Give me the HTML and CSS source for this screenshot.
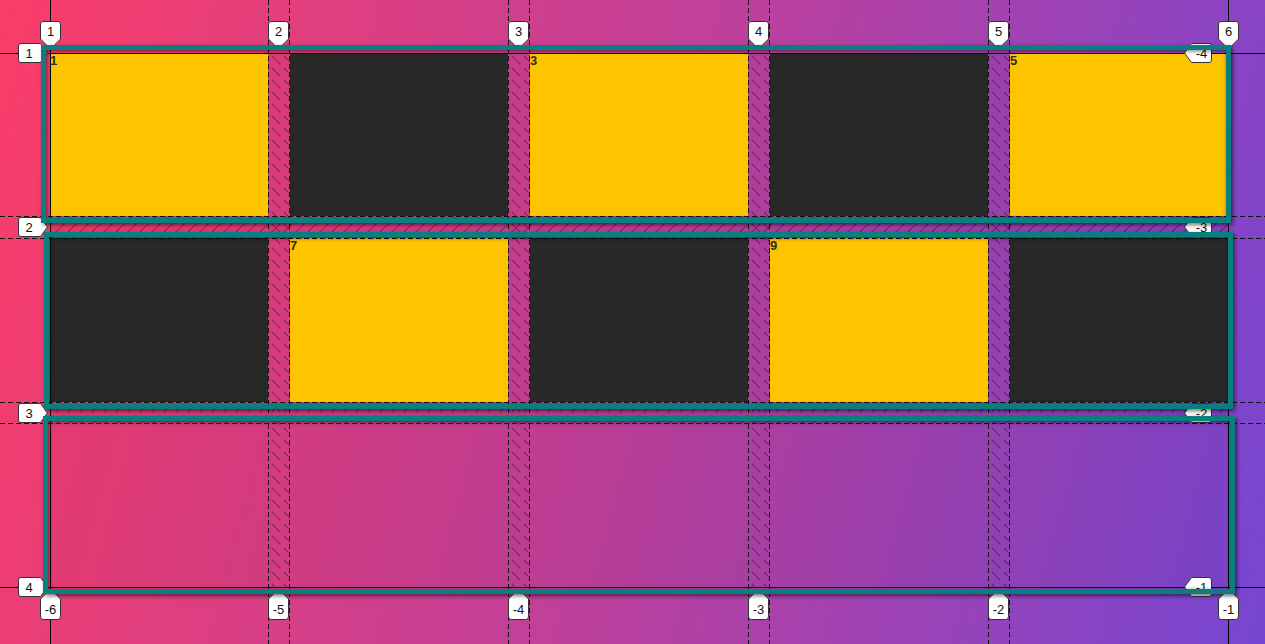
FILE: index.html
```html
<!DOCTYPE html>
<html lang="en">
<head>
<meta charset="utf-8">
<title>Grid inspector</title>
<link rel="stylesheet" href="styles.css">
</head>
<body>
<div class="grid">
  <div class="cell light">1</div>
  <div class="cell dark">2</div>
  <div class="cell light">3</div>
  <div class="cell dark">4</div>
  <div class="cell light">5</div>
  <div class="cell dark">6</div>
  <div class="cell light">7</div>
  <div class="cell dark">8</div>
  <div class="cell light">9</div>
  <div class="cell dark">10</div>
</div>

<svg class="overlay" width="1265" height="644" viewBox="0 0 1265 644" xmlns="http://www.w3.org/2000/svg">
  <defs>
    <pattern id="hatchCol" patternUnits="userSpaceOnUse" width="12" height="12">
      <path d="M0 0 L12 12" stroke="rgba(0,0,0,0.32)" stroke-width="1.2" stroke-dasharray="6 5"/>
    </pattern>
    <pattern id="hatchRow" patternUnits="userSpaceOnUse" width="12" height="12">
      <path d="M0 12 L12 0" stroke="rgba(0,0,0,0.32)" stroke-width="1.2" stroke-dasharray="6 5"/>
    </pattern>
  </defs>

  <g class="gaps">
    <rect x="268" y="53" width="22" height="534" fill="url(#hatchCol)"/>
    <rect x="508" y="53" width="22" height="534" fill="url(#hatchCol)"/>
    <rect x="748" y="53" width="22" height="534" fill="url(#hatchCol)"/>
    <rect x="988" y="53" width="22" height="534" fill="url(#hatchCol)"/>
    <rect x="50" y="216.33" width="1178" height="22" fill="url(#hatchRow)"/>
    <rect x="50" y="401.67" width="1178" height="22" fill="url(#hatchRow)"/>
  </g>

  <g class="dashed" stroke="#111" stroke-width="1" stroke-dasharray="5 3">
    <line x1="268.5" y1="0" x2="268.5" y2="644"/>
    <line x1="289.5" y1="0" x2="289.5" y2="644"/>
    <line x1="508.5" y1="0" x2="508.5" y2="644"/>
    <line x1="529.5" y1="0" x2="529.5" y2="644"/>
    <line x1="748.5" y1="0" x2="748.5" y2="644"/>
    <line x1="769.5" y1="0" x2="769.5" y2="644"/>
    <line x1="988.5" y1="0" x2="988.5" y2="644"/>
    <line x1="1009.5" y1="0" x2="1009.5" y2="644"/>
    <line x1="0" y1="216.5" x2="1265" y2="216.5"/>
    <line x1="0" y1="238.5" x2="1265" y2="238.5"/>
    <line x1="0" y1="402.5" x2="1265" y2="402.5"/>
    <line x1="0" y1="423.5" x2="1265" y2="423.5"/>
  </g>

  <g class="solid" stroke="#000" stroke-width="1">
    <line x1="50.5" y1="0" x2="50.5" y2="644"/>
    <line x1="1228.5" y1="0" x2="1228.5" y2="644"/>
    <line x1="0" y1="53.5" x2="1265" y2="53.5"/>
    <line x1="0" y1="587.5" x2="1265" y2="587.5"/>
  </g>

  <g class="labels">
    <!-- top column labels -->
    <path class="lbl" d="M40.5 39 V24 Q40.5 21.5 43 21.5 H58 Q60.5 21.5 60.5 24 V39 L50.5 49 Z"/>
    <text class="lt" x="50.5" y="35.5">1</text>
    <path class="lbl" d="M268.5 39 V24 Q268.5 21.5 271 21.5 H286 Q288.5 21.5 288.5 24 V39 L278.5 49 Z"/>
    <text class="lt" x="278.5" y="35.5">2</text>
    <path class="lbl" d="M508.5 39 V24 Q508.5 21.5 511 21.5 H526 Q528.5 21.5 528.5 24 V39 L518.5 49 Z"/>
    <text class="lt" x="518.5" y="35.5">3</text>
    <path class="lbl" d="M748.5 39 V24 Q748.5 21.5 751 21.5 H766 Q768.5 21.5 768.5 24 V39 L758.5 49 Z"/>
    <text class="lt" x="758.5" y="35.5">4</text>
    <path class="lbl" d="M988.5 39 V24 Q988.5 21.5 991 21.5 H1006 Q1008.5 21.5 1008.5 24 V39 L998.5 49 Z"/>
    <text class="lt" x="998.5" y="35.5">5</text>
    <path class="lbl" d="M1218.5 39 V24 Q1218.5 21.5 1221 21.5 H1236 Q1238.5 21.5 1238.5 24 V39 L1228.5 49 Z"/>
    <text class="lt" x="1228.5" y="35.5">6</text>

    <!-- bottom column labels -->
    <path class="lbl" d="M40.5 599 V616 Q40.5 619.5 43 619.5 H58 Q60.5 619.5 60.5 616 V599 L50.5 589 Z"/>
    <text class="lt" x="50.5" y="614">-6</text>
    <path class="lbl" d="M268.5 599 V616 Q268.5 619.5 271 619.5 H286 Q288.5 619.5 288.5 616 V599 L278.5 589 Z"/>
    <text class="lt" x="278.5" y="614">-5</text>
    <path class="lbl" d="M508.5 599 V616 Q508.5 619.5 511 619.5 H526 Q528.5 619.5 528.5 616 V599 L518.5 589 Z"/>
    <text class="lt" x="518.5" y="614">-4</text>
    <path class="lbl" d="M748.5 599 V616 Q748.5 619.5 751 619.5 H766 Q768.5 619.5 768.5 616 V599 L758.5 589 Z"/>
    <text class="lt" x="758.5" y="614">-3</text>
    <path class="lbl" d="M988.5 599 V616 Q988.5 619.5 991 619.5 H1006 Q1008.5 619.5 1008.5 616 V599 L998.5 589 Z"/>
    <text class="lt" x="998.5" y="614">-2</text>
    <path class="lbl" d="M1218.5 599 V616 Q1218.5 619.5 1221 619.5 H1236 Q1238.5 619.5 1238.5 616 V599 L1228.5 589 Z"/>
    <text class="lt" x="1228.5" y="614">-1</text>

    <!-- left row labels -->
    <path class="lbl" d="M40.5 43.5 H21 Q18.5 43.5 18.5 46 V60 Q18.5 62.5 21 62.5 H40.5 L47.5 53 Z"/>
    <text class="lt" x="29" y="57.5">1</text>
    <path class="lbl" d="M40.5 217.5 H21 Q18.5 217.5 18.5 220 V234 Q18.5 236.5 21 236.5 H40.5 L47.5 227 Z"/>
    <text class="lt" x="29" y="231.5">2</text>
    <path class="lbl" d="M40.5 403.5 H21 Q18.5 403.5 18.5 406 V420 Q18.5 422.5 21 422.5 H40.5 L47.5 413 Z"/>
    <text class="lt" x="29" y="417.5">3</text>
    <path class="lbl" d="M40.5 577.5 H21 Q18.5 577.5 18.5 580 V594 Q18.5 596.5 21 596.5 H40.5 L47.5 587 Z"/>
    <text class="lt" x="29" y="591.5">4</text>

    <!-- right row labels -->
    <path class="lbl" d="M1191.5 43.5 H1209 Q1211.5 43.5 1211.5 46 V60 Q1211.5 62.5 1209 62.5 H1191.5 L1184.5 53 Z"/>
    <text class="lt" x="1201.5" y="57.5">-4</text>
    <path class="lbl" d="M1191.5 217.5 H1209 Q1211.5 217.5 1211.5 220 V234 Q1211.5 236.5 1209 236.5 H1191.5 L1184.5 227 Z"/>
    <text class="lt" x="1201.5" y="231.5">-3</text>
    <path class="lbl" d="M1191.5 403.5 H1209 Q1211.5 403.5 1211.5 406 V420 Q1211.5 422.5 1209 422.5 H1191.5 L1184.5 413 Z"/>
    <text class="lt" x="1201.5" y="417.5">-2</text>
    <path class="lbl" d="M1191.5 577.5 H1209 Q1211.5 577.5 1211.5 580 V594 Q1211.5 596.5 1209 596.5 H1191.5 L1184.5 587 Z"/>
    <text class="lt" x="1201.5" y="591.5">-1</text>
  </g>
</svg>

<div class="rowbox row-1"></div>
<div class="rowbox row-2"></div>
<div class="rowbox row-3"></div>
</body>
</html>
```

FILE: styles.css
```css
html, body {
  margin: 0;
  padding: 0;
  width: 1265px;
  height: 644px;
  overflow: hidden;
}

body {
  position: relative;
  background: linear-gradient(105deg, #fa3d68 0%, #c0409a 50%, #7646d2 100%);
  font-family: "Liberation Sans", Arial, sans-serif;
}

.grid {
  margin: 0 0 0 50px;
  position: relative;
  top: 53px;
  width: 1178px;
  height: 534px;
  display: grid;
  grid-template-columns: repeat(5, 218px);
  grid-template-rows: repeat(3, 1fr);
  gap: 22px;
  background: rgba(40, 0, 30, 0.04);
}

.cell {
  font: bold 13px/15px "Liberation Sans", Arial, sans-serif;
}

.cell.light {
  background: #ffc400;
  color: #2e2a1a;
}

.cell.dark {
  background: #282828;
  color: #292929;
}

.overlay {
  position: absolute;
  left: 0;
  top: 0;
  pointer-events: none;
}

.lbl {
  fill: #ffffff;
  stroke: #333333;
  stroke-width: 1;
}

.lt {
  font: 13px "Liberation Sans", Arial, sans-serif;
  fill: #111;
  text-anchor: middle;
}

.rowbox {
  position: absolute;
  box-sizing: border-box;
  border: 5px solid #0b7f7f;
  box-shadow: 2px 2px 4px rgba(0, 0, 0, 0.55), inset 1px 1px 4px rgba(0, 0, 0, 0.55);
  pointer-events: none;
}

.row-1 {
  left: 41px;
  top: 45px;
  width: 1190px;
  height: 178px;
}

.row-2 {
  left: 44px;
  top: 232px;
  width: 1189px;
  height: 177px;
}

.row-3 {
  left: 43px;
  top: 416px;
  width: 1192px;
  height: 178px;
}
```
